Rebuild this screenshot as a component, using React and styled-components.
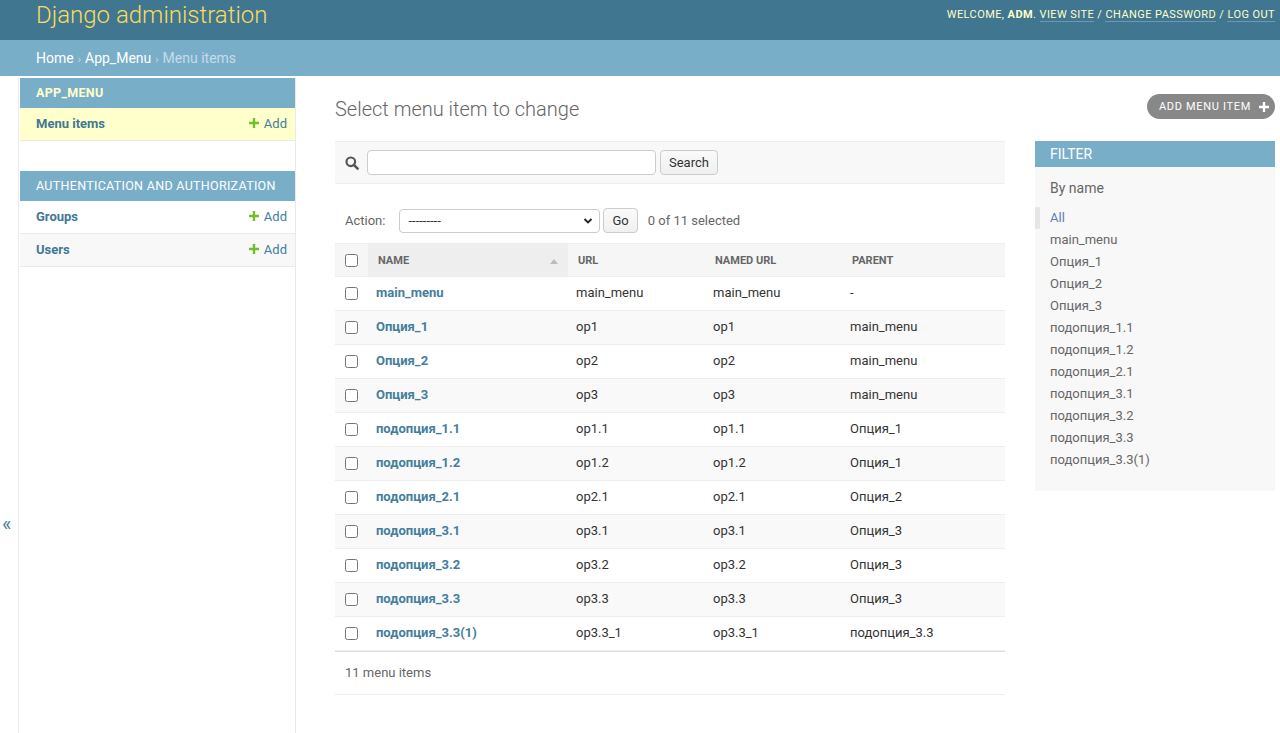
import React from 'react';
import styled, { createGlobalStyle } from 'styled-components';

const GlobalStyle = createGlobalStyle`
  html, body {
    margin: 0;
    padding: 0;
    background: #fff;
    color: #333;
    font-family: Roboto, "Liberation Sans", Arial, sans-serif;
    font-size: 14px;
  }
  * {
    box-sizing: border-box;
  }
`;

const Header = styled.div`
  height: 40px;
  background: #417690;
  display: flex;
  justify-content: space-between;
  align-items: flex-start;
  padding: 0 5px 0 36px;
`;

const Branding = styled.h1`
  margin: 0;
  font-size: 24px;
  font-weight: 300;
  line-height: 30px;
  color: #f5dd5d;
`;

const UserTools = styled.div`
  font-size: 11px;
  line-height: 30px;
  letter-spacing: 0.42px;
  text-transform: uppercase;
  color: #ffc;

  strong {
    font-weight: 700;
  }
`;

const ToolLink = styled.span`
  color: #ffc;
  border-bottom: 1px solid rgba(255, 255, 255, 0.25);
`;

const Breadcrumbs = styled.div`
  height: 36px;
  background: #79aec8;
  padding: 0 36px;
  font-size: 14px;
  line-height: 36px;
  color: #c4dce8;
`;

const Crumb = styled.span`
  color: ${({ $current }) => ($current ? '#c4dce8' : '#fff')};
`;

const Sep = styled.span`
  color: #c4dce8;
  font-size: 11px;
  margin: 0 4px;
`;

const Main = styled.div`
  display: flex;
  min-height: calc(100vh - 76px);
  padding-top: 2px;
`;

const Toggle = styled.div`
  width: 19px;
  flex-shrink: 0;
  border-right: 1px solid #eaeaea;
  color: #447e9b;
  font-size: 20px;
  padding-top: 434px;
  padding-left: 2px;
`;

const NavSidebar = styled.div`
  width: 277px;
  flex-shrink: 0;
  border-right: 1px solid #eaeaea;
  padding-left: 1px;
`;

const Module = styled.div`
  margin-bottom: 30px;
`;

const Caption = styled.div`
  height: 30px;
  background: #79aec8;
  padding: 0 16px;
  line-height: 30px;
  font-size: 12.5px;
  letter-spacing: 0.3px;
  text-transform: uppercase;
  color: ${({ $current }) => ($current ? '#ffc' : '#fff')};
  font-weight: ${({ $current }) => ($current ? 700 : 400)};
`;

const ModelRow = styled.div`
  display: flex;
  justify-content: space-between;
  align-items: center;
  height: 33px;
  padding: 0 8px 2px 16px;
  border-bottom: 1px solid #eaeaea;
  font-size: 13px;
  background: ${({ $bg }) => $bg};
`;

const ModelName = styled.span`
  color: #417893;
  font-weight: 700;
`;

const AddLink = styled.span`
  display: flex;
  align-items: center;
  gap: 5px;
  color: #447e9b;
`;

const Content = styled.div`
  flex: 1;
  padding: 16px 5px 0 39px;
`;

const TitleRow = styled.div`
  display: flex;
  justify-content: space-between;
  align-items: flex-start;
  height: 47px;
`;

const Title = styled.h1`
  margin: 2px 0 0 0;
  font-size: 20px;
  font-weight: 300;
  line-height: 26px;
  color: #666;
`;

const ObjectTool = styled.span`
  display: flex;
  align-items: center;
  gap: 8px;
  height: 25px;
  padding: 0 6px 0 12px;
  border-radius: 15px;
  background: #888;
  color: #fff;
  font-size: 11px;
  letter-spacing: 0.68px;
  text-transform: uppercase;
`;

const Columns = styled.div`
  display: flex;
  gap: 30px;
  align-items: flex-start;
`;

const ChangeList = styled.div`
  width: 670px;
  flex-shrink: 0;
`;

const Toolbar = styled.div`
  height: 43px;
  display: flex;
  align-items: center;
  gap: 4px;
  padding: 0 10px;
  background: #f8f8f8;
  border-top: 1px solid #eee;
  border-bottom: 1px solid #eee;
`;

const SearchInput = styled.div`
  width: 289px;
  height: 25px;
  margin-left: 4px;
  border: 1px solid #ccc;
  border-radius: 4px;
  background: #fff;
`;

const Button = styled.span`
  display: inline-flex;
  align-items: center;
  justify-content: center;
  height: ${({ $h }) => $h || 25}px;
  padding: 0 ${({ $px }) => $px || 8}px;
  border: 1px solid #ccc;
  border-radius: 4px;
  background: linear-gradient(#fafafa, #f0f0f0);
  color: #333;
  font-size: 13px;
`;

const Actions = styled.div`
  display: flex;
  align-items: center;
  height: 25px;
  margin-top: 24px;
  margin-bottom: 10px;
  padding-left: 10px;
  font-size: 13px;
  color: #666;
`;

const SelectBox = styled.div`
  width: 201px;
  height: 24px;
  margin: 0 3px 0 14px;
  display: flex;
  align-items: center;
  justify-content: space-between;
  padding: 0 6px 0 8px;
  border: 1px solid #ccc;
  border-radius: 4px;
  background: #fff;
  color: #333;
  font-size: 13px;
`;

const Counter = styled.span`
  margin-left: 10px;
  color: #666;
`;

const Table = styled.table`
  width: 670px;
  border-collapse: collapse;
  table-layout: fixed;
  font-size: 13px;
`;

const Th = styled.th`
  height: 33px;
  padding: 0 10px;
  text-align: left;
  font-size: 11px;
  font-weight: 700;
  text-transform: uppercase;
  color: #666;
  background: ${({ $sorted }) => ($sorted ? '#eee' : '#f6f6f6')};
  border-top: 1px solid #eee;
  border-bottom: 1px solid #eee;
  position: relative;
`;

const SortArrow = styled.span`
  position: absolute;
  right: 10px;
  top: 15px;
  width: 0;
  height: 0;
  border-left: 4px solid transparent;
  border-right: 4px solid transparent;
  border-bottom: 5px solid #bbb;
`;

const Tr = styled.tr`
  background: ${({ $odd }) => ($odd ? '#f9f9f9' : '#fff')};
`;

const Td = styled.td`
  height: 34px;
  padding: 0 8px 2px;
  border-bottom: 1px solid #eee;
  color: #333;
  white-space: nowrap;
  overflow: hidden;

  &:first-child {
    padding: 0 10px;
  }
`;

const NameLink = styled.span`
  color: #447e9b;
  font-weight: 700;
`;

const Check = styled.input`
  display: block;
  width: 13px;
  height: 13px;
  margin: 0;
`;

const Paginator = styled.div`
  height: 44px;
  padding-left: 10px;
  line-height: 41px;
  font-size: 13px;
  color: #666;
  border-top: 1px solid #ddd;
  border-bottom: 1px solid #eee;
`;

const Filter = styled.div`
  width: 240px;
  flex-shrink: 0;
  background: #f8f8f8;
  padding-bottom: 20px;
`;

const FilterHead = styled.div`
  height: 26px;
  background: #79aec8;
  padding: 0 15px;
  line-height: 26px;
  font-size: 14px;
  color: #fff;
`;

const FilterTitle = styled.h3`
  margin: 12px 15px 10px;
  font-size: 14px;
  font-weight: 400;
  line-height: 18px;
  color: #666;
`;

const FilterList = styled.ul`
  list-style: none;
  margin: 0;
  padding: 0;
`;

const FilterItem = styled.li`
  line-height: 22px;
  font-size: 13px;
  padding-left: ${({ $selected }) => ($selected ? 10 : 15)}px;
  border-left: ${({ $selected }) => ($selected ? '5px solid #e6e6e6' : 'none')};
  color: ${({ $selected }) => ($selected ? '#5b80b2' : '#666')};
`;

function PlusIcon({ color, size = 10 }) {
  return (
    <svg width={size} height={size} viewBox="0 0 10 10">
      <path d="M3.8 0h2.4v3.8H10v2.4H6.2V10H3.8V6.2H0V3.8h3.8z" fill={color} />
    </svg>
  );
}

function SearchIcon() {
  return (
    <svg width="14" height="14" viewBox="0 0 14 14">
      <circle cx="5.8" cy="5.8" r="4.3" fill="none" stroke="#555" strokeWidth="2.2" />
      <path d="M8.8 8.8l3.8 3.8" stroke="#555" strokeWidth="2.6" strokeLinecap="round" />
    </svg>
  );
}

function Chevron() {
  return (
    <svg width="10" height="8" viewBox="0 0 10 8">
      <path d="M1.5 2l3.5 3.5L8.5 2" fill="none" stroke="#222" strokeWidth="1.8" />
    </svg>
  );
}

const rows = [
  ['main_menu', 'main_menu', 'main_menu', '-'],
  ['Опция_1', 'op1', 'op1', 'main_menu'],
  ['Опция_2', 'op2', 'op2', 'main_menu'],
  ['Опция_3', 'op3', 'op3', 'main_menu'],
  ['подопция_1.1', 'op1.1', 'op1.1', 'Опция_1'],
  ['подопция_1.2', 'op1.2', 'op1.2', 'Опция_1'],
  ['подопция_2.1', 'op2.1', 'op2.1', 'Опция_2'],
  ['подопция_3.1', 'op3.1', 'op3.1', 'Опция_3'],
  ['подопция_3.2', 'op3.2', 'op3.2', 'Опция_3'],
  ['подопция_3.3', 'op3.3', 'op3.3', 'Опция_3'],
  ['подопция_3.3(1)', 'op3.3_1', 'op3.3_1', 'подопция_3.3'],
];

const filterNames = [
  'main_menu', 'Опция_1', 'Опция_2', 'Опция_3', 'подопция_1.1', 'подопция_1.2',
  'подопция_2.1', 'подопция_3.1', 'подопция_3.2', 'подопция_3.3', 'подопция_3.3(1)',
];

function App() {
  return (
    <>
      <GlobalStyle />
      <Header>
        <Branding>Django administration</Branding>
        <UserTools>
          Welcome, <strong>adm</strong>. <ToolLink>View site</ToolLink> / <ToolLink>Change password</ToolLink> / <ToolLink>Log out</ToolLink>
        </UserTools>
      </Header>
      <Breadcrumbs>
        <Crumb>Home</Crumb><Sep>›</Sep><Crumb>App_Menu</Crumb><Sep>›</Sep><Crumb $current>Menu items</Crumb>
      </Breadcrumbs>
      <Main>
        <Toggle>«</Toggle>
        <NavSidebar>
          <Module>
            <Caption $current>App_Menu</Caption>
            <ModelRow $bg="#ffc">
              <ModelName>Menu items</ModelName>
              <AddLink><PlusIcon color="#70bf2b" />Add</AddLink>
            </ModelRow>
          </Module>
          <Module>
            <Caption>Authentication and Authorization</Caption>
            <ModelRow $bg="#fff">
              <ModelName>Groups</ModelName>
              <AddLink><PlusIcon color="#70bf2b" />Add</AddLink>
            </ModelRow>
            <ModelRow $bg="#f8f8f8">
              <ModelName>Users</ModelName>
              <AddLink><PlusIcon color="#70bf2b" />Add</AddLink>
            </ModelRow>
          </Module>
        </NavSidebar>
        <Content>
          <TitleRow>
            <Title>Select menu item to change</Title>
            <ObjectTool>Add menu item <PlusIcon color="#fff" /></ObjectTool>
          </TitleRow>
          <Columns>
            <ChangeList>
              <Toolbar>
                <SearchIcon />
                <SearchInput />
                <Button $px={8}>Search</Button>
              </Toolbar>
              <Actions>
                Action:
                <SelectBox>---------<Chevron /></SelectBox>
                <Button $h={25} $px={8}>Go</Button>
                <Counter>0 of 11 selected</Counter>
              </Actions>
              <Table>
                <colgroup>
                  <col style={{ width: 33 }} />
                  <col style={{ width: 200 }} />
                  <col style={{ width: 137 }} />
                  <col style={{ width: 137 }} />
                  <col style={{ width: 163 }} />
                </colgroup>
                <thead>
                  <tr>
                    <Th><Check type="checkbox" /></Th>
                    <Th $sorted>Name<SortArrow /></Th>
                    <Th>Url</Th>
                    <Th>Named url</Th>
                    <Th>Parent</Th>
                  </tr>
                </thead>
                <tbody>
                  {rows.map((r, i) => (
                    <Tr key={r[0]} $odd={i % 2 === 1}>
                      <Td><Check type="checkbox" /></Td>
                      <Td><NameLink>{r[0]}</NameLink></Td>
                      <Td>{r[1]}</Td>
                      <Td>{r[2]}</Td>
                      <Td>{r[3]}</Td>
                    </Tr>
                  ))}
                </tbody>
              </Table>
              <Paginator>11 menu items</Paginator>
            </ChangeList>
            <Filter>
              <FilterHead>FILTER</FilterHead>
              <FilterTitle>By name</FilterTitle>
              <FilterList>
                <FilterItem $selected>All</FilterItem>
                {filterNames.map((n) => (
                  <FilterItem key={n}>{n}</FilterItem>
                ))}
              </FilterList>
            </Filter>
          </Columns>
        </Content>
      </Main>
    </>
  );
}

export default App;
